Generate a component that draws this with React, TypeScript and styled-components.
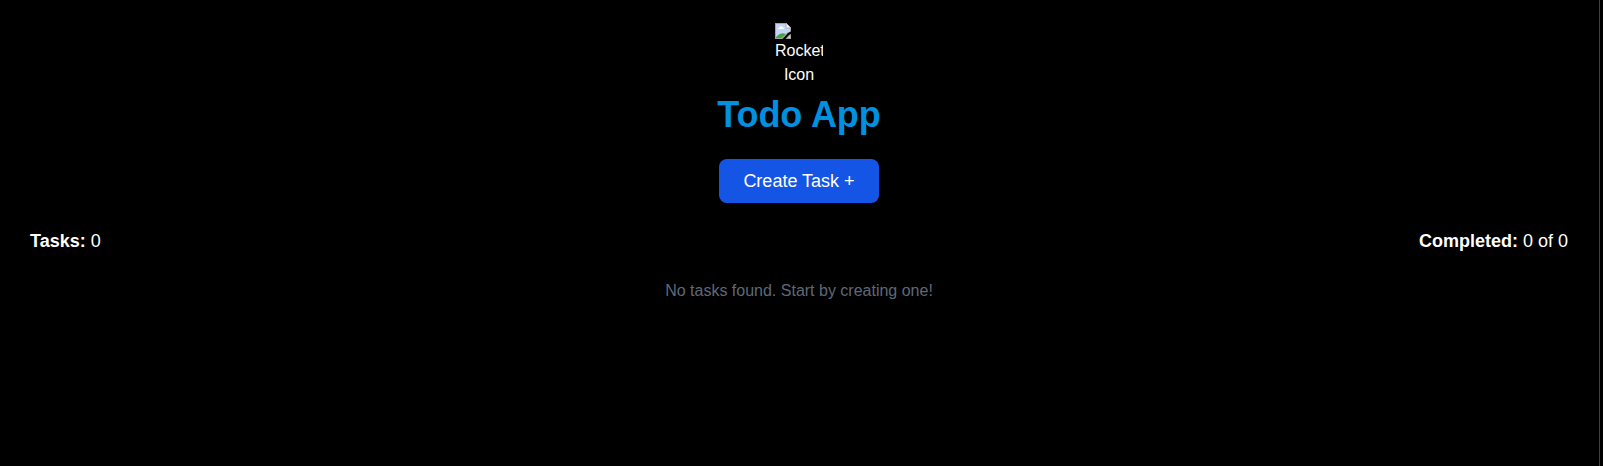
import React from "react";
import styled, { createGlobalStyle } from "styled-components";

const GlobalStyle = createGlobalStyle`
  * { box-sizing: border-box; }
  body { margin: 0; background: #000; }
`;

const Page = styled.div`
  display: flex;
  height: 466px;
  background: #000;
  color: #fff;
  font: 16px/24px "Liberation Sans", Arial, sans-serif;
`;

const Content = styled.main`
  flex: 1;
  padding: 23px 31px 0 30px;
`;

const ScrollTrack = styled.div`
  width: 4px;
  border-left: 1px solid #404040;
`;

const Header = styled.header`
  display: flex;
  flex-direction: column;
  align-items: center;
`;

const MissingImage = styled.div`
  width: 48px;
  height: 64px;
  overflow: hidden;
  text-align: center;

  svg {
    display: block;
  }
`;

const Title = styled.h1`
  margin: 8px 0 0;
  font-size: 36px;
  line-height: 40px;
  font-weight: 700;
  letter-spacing: -0.05px;
  color: #0090e0;
`;

const CreateButton = styled.button`
  width: 160px;
  height: 44px;
  margin-top: 24px;
  padding: 0;
  border: 0;
  border-radius: 8px;
  background: #1555e5;
  color: #fff;
  font: 18px/28px "Liberation Sans", Arial, sans-serif;
`;

const Summary = styled.div`
  display: flex;
  justify-content: space-between;
  margin-top: 24px;
  font-size: 18px;
  line-height: 28px;
`;

const Empty = styled.p`
  margin: 24px 0 0;
  text-align: center;
  color: #5f6878;
`;

function BrokenImage() {
  return (
    <svg width="16" height="16" viewBox="0 0 16 16">
      <path d="M0 0H11L16 5V8.5L13 10L7.5 16H0Z" fill="#a3a3a3" />
      <path d="M1 1H10.5L15 5.5V8.5L12.5 9.5L7 15H1Z" fill="#c3d5f7" />
      <path d="M3 6C3 4.6 4 4.4 4.5 4.4C5 3 7.3 3 7.6 4.5C8.7 4.5 9 5.3 9 6Z" fill="#fff" />
      <path d="M1 15V14C4 10.5 7 9.5 9 10.5L11 11L7 15Z" fill="#48a640" />
      <path d="M11 0V5H16Z" fill="#f5f5f5" stroke="#a3a3a3" strokeWidth=".8" />
      <path d="M16 11V16H10.5L14 12Z" fill="#a3a3a3" />
      <path d="M15 12.5V15H12.5Z" fill="#c3d5f7" />
    </svg>
  );
}

export default function App() {
  return (
    <Page>
      <GlobalStyle />
      <Content>
        <Header>
          <MissingImage role="img" aria-label="Rocket Icon">
            <BrokenImage />
            Rocket Icon
          </MissingImage>
          <Title>Todo App</Title>
          <CreateButton>Create Task +</CreateButton>
        </Header>
        <Summary>
          <span><strong>Tasks:</strong> 0</span>
          <span><strong>Completed:</strong> 0 of 0</span>
        </Summary>
        <Empty>No tasks found. Start by creating one!</Empty>
      </Content>
      <ScrollTrack />
    </Page>
  );
}
